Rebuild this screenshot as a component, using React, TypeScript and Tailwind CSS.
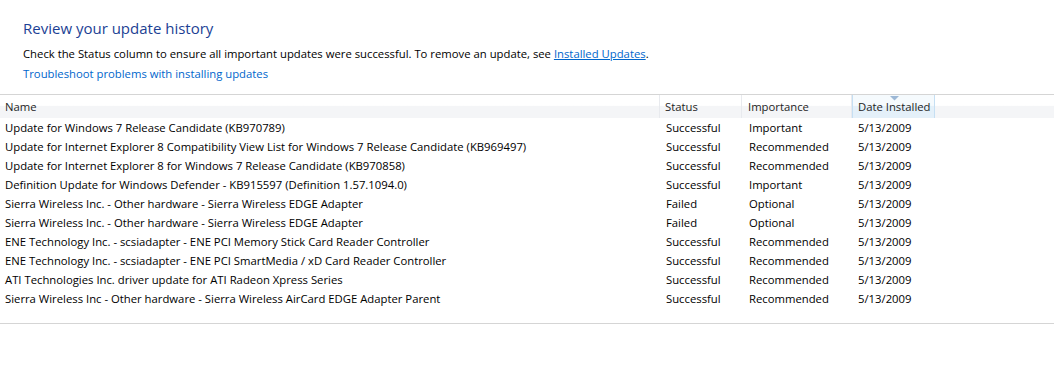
const rows = [
  ['Update for Windows 7 Release Candidate (KB970789)', 'Successful', 'Important'],
  ['Update for Internet Explorer 8 Compatibility View List for Windows 7 Release Candidate (KB969497)', 'Successful', 'Recommended'],
  ['Update for Internet Explorer 8 for Windows 7 Release Candidate (KB970858)', 'Successful', 'Recommended'],
  ['Definition Update for Windows Defender - KB915597 (Definition 1.57.1094.0)', 'Successful', 'Important'],
  ['Sierra Wireless Inc. - Other hardware - Sierra Wireless EDGE Adapter', 'Failed', 'Optional'],
  ['Sierra Wireless Inc. - Other hardware - Sierra Wireless EDGE Adapter', 'Failed', 'Optional'],
  ['ENE Technology Inc. - scsiadapter - ENE PCI Memory Stick Card Reader Controller', 'Successful', 'Recommended'],
  ['ENE Technology Inc. - scsiadapter - ENE PCI SmartMedia / xD Card Reader Controller', 'Successful', 'Recommended'],
  ['ATI Technologies Inc. driver update for ATI Radeon Xpress Series', 'Successful', 'Recommended'],
  ['Sierra Wireless Inc - Other hardware - Sierra Wireless AirCard EDGE Adapter Parent', 'Successful', 'Recommended'],
];

function Header() {
  return (
    <div className="flex h-[24px] border-t border-[#d5d5d5] bg-[linear-gradient(#ffffff_0%,#ffffff_45%,#f4f5f7_50%,#f4f5f7_100%)] text-[#1e1e1e] whitespace-nowrap">
      <div className="w-[660px] pl-[5px] pt-[2px] flex items-center border-r border-[#e8eaee]">Name</div>
      <div className="w-[82px] pl-[5px] pt-[2px] flex items-center border-r border-[#e8eaee]">Status</div>
      <div className="w-[110px] pl-[6px] pt-[2px] flex items-center border-r border-[#e8eaee]">Importance</div>
      <div className="relative w-[83px] pl-[5px] pt-[2px] flex items-center bg-[linear-gradient(#f5fafd_0%,#f5fafd_45%,#e4f0f9_50%,#e4f0f9_100%)] border-x border-[#c5dff3]">
        <svg className="absolute left-[37px] top-[1px]" width="9" height="5" viewBox="0 0 9 5">
          <path d="M0 0 L9 0 L4.5 4.5 Z" fill="#9db8d6" />
        </svg>
        Date Installed
      </div>
      <div className="flex-1" />
    </div>
  );
}

export default function App() {
  return (
    <div className="w-[1054px] h-[390px] bg-white overflow-hidden text-[11.3px] text-black font-['Open_Sans',sans-serif]">
      <div className="pl-[23px] pt-[17px] pb-[11px]">
        <h1 className="text-[15px] leading-[22px] text-[#1c3f94]">Review your update history</h1>
        <p className="mt-[5px] leading-[19px]">
          Check the Status column to ensure all important updates were successful. To remove an update, see{' '}
          <a href="#" className="text-[#0066cc] underline">Installed Updates</a>.
        </p>
        <p className="leading-[19px] mt-[1px] text-[#0066cc]">Troubleshoot problems with installing updates</p>
      </div>
      <Header />
      <div className="pt-[1px] pb-[14px] border-b border-[#d5d5d5]">
        {rows.map((r, i) => (
          <div key={i} className="flex h-[19px] items-center whitespace-nowrap">
            <div className="w-[666px] pl-[5px] overflow-hidden">{r[0]}</div>
            <div className="w-[83px]">{r[1]}</div>
            <div className="w-[109px]">{r[2]}</div>
            <div>5/13/2009</div>
          </div>
        ))}
      </div>
    </div>
  );
}
